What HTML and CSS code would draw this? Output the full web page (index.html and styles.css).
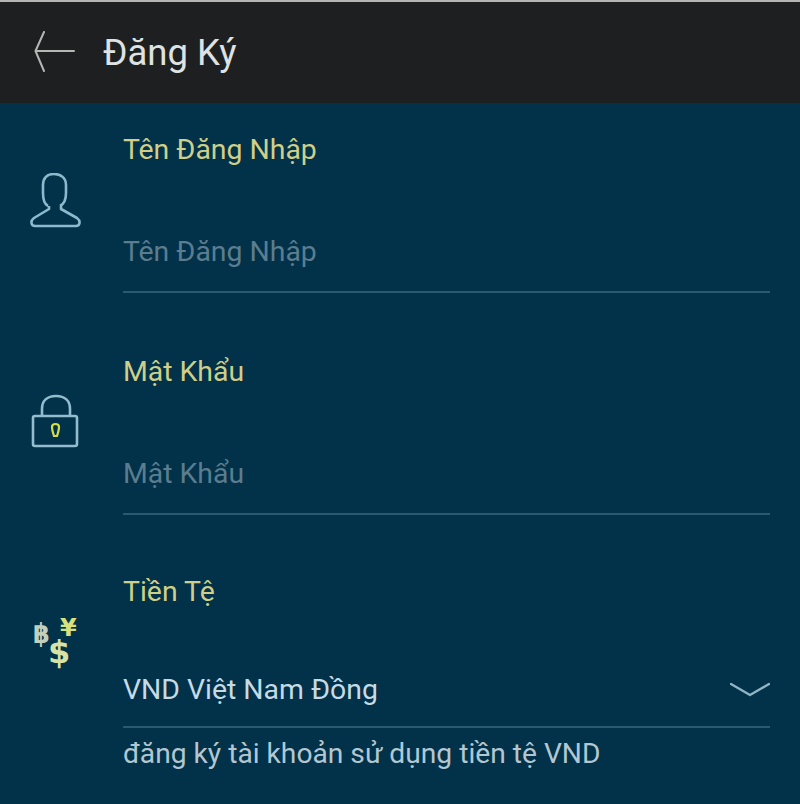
FILE: index.html
```html
<!DOCTYPE html>
<html lang="vi">
<head>
<meta charset="utf-8">
<title>Đăng Ký</title>
<link rel="stylesheet" href="styles.css">
</head>
<body>
<div class="screen">
  <header class="topbar">
    <svg class="back" width="44" height="42" viewBox="0 0 44 42" fill="none" stroke="#b4b6b4" stroke-width="2" stroke-linecap="round" stroke-linejoin="round"><path d="M41 20H2.500M11 1 2.500 20 11 40"/></svg>
    <h1 class="title">Đăng Ký</h1>
  </header>
  <main class="form">
    <section class="field">
      <div class="icon-col">
        <svg class="icon" width="52" height="56" viewBox="0 0 52 56" fill="none" stroke="#8db9cc" stroke-width="2.600" stroke-linejoin="round"><path d="M19 33C15 31 14 26 14 20V12C14 5 18 1 25 1S37 5 37 12V20C37 26 35 31 31 33"/><path d="M20 33V36L5 45C1 48 2 53 6 53H47C51 53 52 48 48 45L32 36V33"/></svg>
      </div>
      <div class="body">
        <div class="label">Tên Đăng Nhập</div>
        <div class="input placeholder">Tên Đăng Nhập</div>
      </div>
    </section>
    <section class="field">
      <div class="icon-col">
        <svg class="icon" width="48" height="54" viewBox="0 0 48 54" fill="none" stroke="#93bccd" stroke-width="2.600"><path d="M11 22V15C11 7 16 2 25 2S39 7 39 15V22"/><rect x="2" y="22" width="44" height="30" rx="2"/><path d="M21 33C21 29 28 29 28 33 28 36 27 39 26 42H23C22 39 21 36 21 33Z" stroke="#d4dc4a" stroke-width="2.200"/></svg>
      </div>
      <div class="body">
        <div class="label">Mật Khẩu</div>
        <div class="input placeholder">Mật Khẩu</div>
      </div>
    </section>
    <section class="field field-select">
      <div class="icon-col">
        <div class="icon currency">
          <span class="cur cur-baht">฿</span>
          <span class="cur cur-yen">¥</span>
          <span class="cur cur-dollar">$</span>
        </div>
      </div>
      <div class="body">
        <div class="label label-tight">Tiền Tệ</div>
        <div class="input select">
          <span>VND Việt Nam Đồng</span>
          <svg class="chevron" width="40" height="16" viewBox="0 0 40 16" fill="none" stroke="#8fb4c4" stroke-width="2.400" stroke-linecap="round" stroke-linejoin="round"><path d="M1 2l19 11L39 2"/></svg>
        </div>
        <div class="hint">đăng ký tài khoản sử dụng tiền tệ VND</div>
      </div>
    </section>
  </main>
</div>
</body>
</html>
```

FILE: styles.css
```css
* { box-sizing: border-box; }
html, body { margin: 0; padding: 0; }
body {
  width: 800px;
  height: 804px;
  overflow: hidden;
  background: #02314a;
  font-family: Roboto, "Noto Sans", sans-serif;
}
.screen { display: flex; flex-direction: column; height: 804px; }
.topbar {
  height: 103px;
  flex: none;
  display: flex;
  align-items: center;
  padding: 0 0 2px 33px;
  background: #1e1f21;
  border-top: 2px solid #b5b5b5;
}
.back { flex: none; margin-right: 26px; }
.title {
  margin: 2px 0 0;
  font-size: 36.5px;
  font-weight: 400;
  line-height: 44px;
  color: #dfe2e2;
}
.form { display: flex; flex-direction: column; padding-right: 30px; }
.field { display: flex; height: 222px; }
.field-select { height: 257px; }
.icon-col { width: 123px; flex: none; padding-top: 70px; padding-left: 29px; }
.field:nth-child(2) .icon-col { padding-left: 31px; padding-top: 69px; }
.field-select .icon-col { padding-left: 33px; padding-top: 68px; }
.icon { display: block; }
.body { flex: 1; min-width: 0; }
.label {
  height: 95px;
  padding-top: 27px;
  font-size: 28.4px;
  line-height: 40px;
  color: #cfcf88;
}
.label-tight { height: 93px; padding-top: 25px; }
.input {
  height: 95px;
  padding-top: 34px;
  font-size: 28.4px;
  line-height: 40px;
  border-bottom: 2px solid #2b5a70;
}
.placeholder { color: #5b7d8e; }
.select {
  display: flex;
  justify-content: space-between;
  color: #c6dbe4;
  height: 88px;
  padding-top: 30px;
}
.select .chevron { margin-top: 12px; }
.hint {
  margin-top: 6px;
  font-size: 28.2px;
  line-height: 40px;
  color: #b3c7d1;
}
.currency { position: relative; width: 48px; height: 56px; }
.cur { position: absolute; font-family: "DejaVu Sans", sans-serif; font-weight: 700; }
.cur-baht { left: 0; top: 7px; font-size: 24px; line-height: 1; color: #c3cfbd; transform: scaleY(1.15); }
.cur-yen { left: 27px; top: 6px; font-size: 24px; line-height: 0.65; color: #d7e27c; }
.cur-dollar { left: 15px; top: 26px; font-size: 32px; line-height: 0.7; color: #d8e2a5; }
```
